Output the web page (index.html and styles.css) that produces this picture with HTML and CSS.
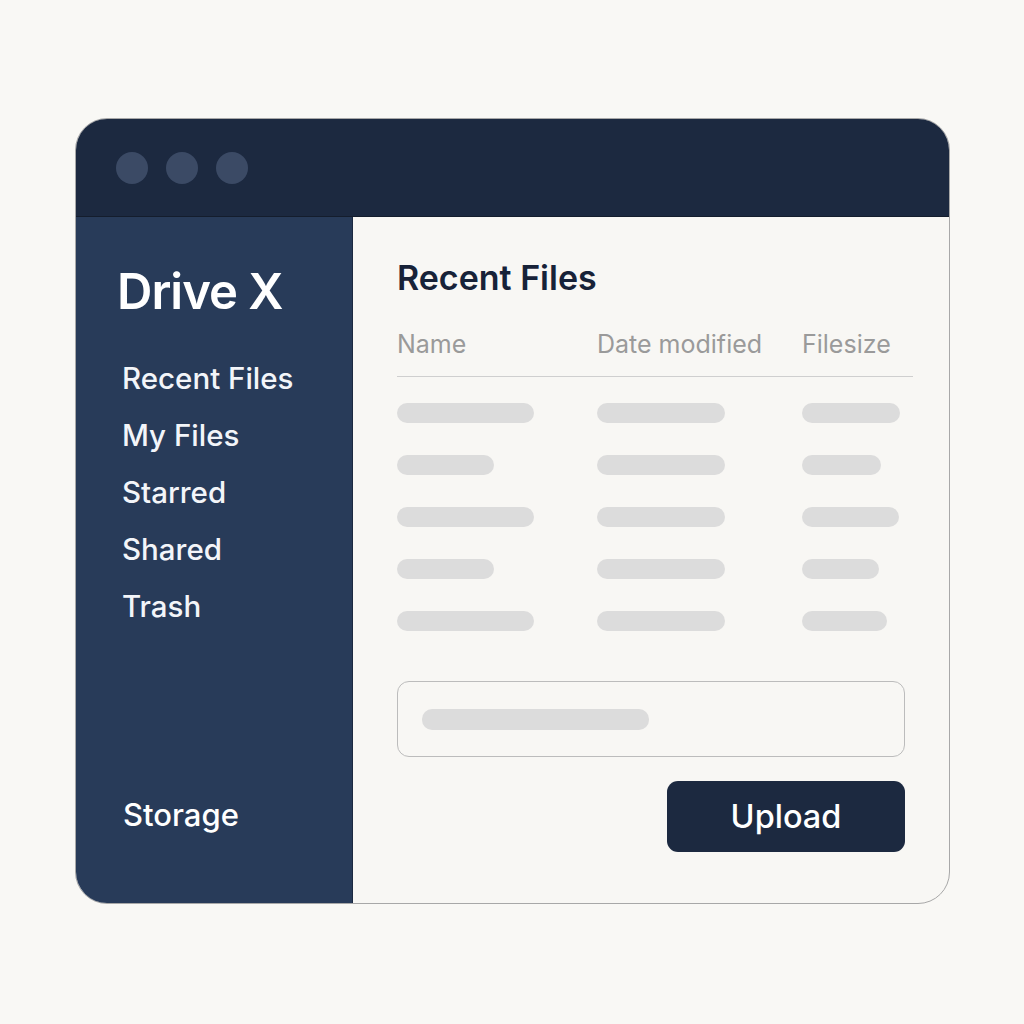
FILE: index.html
```html
<!DOCTYPE html>
<html lang="en">
<head>
<meta charset="utf-8">
<title>Drive X</title>
<link rel="stylesheet" href="styles.css">
</head>
<body>
<div class="page">
  <div class="window">
    <div class="titlebar">
      <span class="dot"></span><span class="dot"></span><span class="dot"></span>
    </div>
    <div class="main">
      <aside class="sidebar">
        <div class="brand">Drive X</div>
        <nav class="nav">
          <div class="nav-item">Recent Files</div>
          <div class="nav-item">My Files</div>
          <div class="nav-item">Starred</div>
          <div class="nav-item">Shared</div>
          <div class="nav-item">Trash</div>
        </nav>
        <div class="storage">Storage</div>
      </aside>
      <section class="content">
        <h1 class="heading">Recent Files</h1>
        <div class="table">
          <div class="thead">
            <div>Name</div><div>Date modified</div><div>Filesize</div>
          </div>
          <div class="row"><span class="bar" style="width:137px"></span><span class="bar" style="width:128px"></span><span class="bar" style="width:98px"></span></div>
          <div class="row"><span class="bar" style="width:97px"></span><span class="bar" style="width:128px"></span><span class="bar" style="width:79px"></span></div>
          <div class="row"><span class="bar" style="width:137px"></span><span class="bar" style="width:128px"></span><span class="bar" style="width:97px"></span></div>
          <div class="row"><span class="bar" style="width:97px"></span><span class="bar" style="width:128px"></span><span class="bar" style="width:77px"></span></div>
          <div class="row"><span class="bar" style="width:137px"></span><span class="bar" style="width:128px"></span><span class="bar" style="width:85px"></span></div>
        </div>
        <div class="input"><span class="bar input-bar"></span></div>
        <div class="actions"><button class="upload">Upload</button></div>
      </section>
    </div>
  </div>
</div>
</body>
</html>
```
FILE: styles.css
```css
* { box-sizing: border-box; }
html, body { margin: 0; padding: 0; }
body {
  background: #f9f8f5;
  font-family: Inter, "Liberation Sans", Arial, sans-serif;
  width: 1024px;
  height: 1024px;
}
.page {
  padding: 118px 74px 0 75px;
}
.window {
  width: 875px;
  height: 786px;
  border-radius: 32px;
  overflow: hidden;
  display: flex;
  flex-direction: column;
  background: #f8f7f4;
  border: 1px solid #a8a8a8;
}
.titlebar {
  height: 98px;
  flex: none;
  background: #1c2940;
  display: flex;
  align-items: center;
  gap: 18px;
  padding-left: 40px;
  border-bottom: 1px solid #141d2d;
}
.dot {
  width: 32px;
  height: 32px;
  border-radius: 50%;
  background: #3b4a65;
}
.main {
  flex: 1;
  display: flex;
}
.sidebar {
  width: 277px;
  flex: none;
  background: #283b59;
  color: #ffffff;
  display: flex;
  flex-direction: column;
  padding: 43px 0 60px 0;
  border-right: 1px solid #1c2940;
}
.brand {
  font-size: 49px;
  font-weight: 600;
  line-height: 64px;
  letter-spacing: -1px;
  padding-left: 41px;
}
.nav {
  margin-top: 26px;
  padding-left: 46px;
}
.nav-item {
  font-size: 29.5px;
  line-height: 57px;
  font-weight: 500;
  color: #f3f5f9;
}
.storage {
  margin-top: auto;
  padding-left: 47px;
  font-size: 31px;
  line-height: 57px;
  font-weight: 500;
}
.content {
  flex: 1;
  padding: 41px 44px 0 44px;
  display: flex;
  flex-direction: column;
}
.heading {
  margin: 0;
  font-size: 34px;
  line-height: 40px;
  font-weight: 600;
  color: #172238;
}
.table {
  margin-top: 31px;
  margin-right: -8px;
}
.thead, .row {
  display: grid;
  grid-template-columns: 200px 205px 1fr;
  align-items: center;
}
.thead {
  font-size: 25px;
  line-height: 30px;
  color: #9a9a9a;
  padding-bottom: 17px;
  border-bottom: 1px solid #cfcfcf;
  margin-bottom: 10px;
}
.row {
  height: 52px;
}
.bar {
  display: block;
  height: 20px;
  border-radius: 10px;
  background: #dcdcdc;
}
.input {
  margin-top: 34px;
  height: 76px;
  border: 1px solid #bcbcbc;
  border-radius: 12px;
  display: flex;
  align-items: center;
  padding-left: 24px;
}
.input-bar {
  width: 227px;
  height: 21px;
}
.actions {
  margin-top: 24px;
  display: flex;
  justify-content: flex-end;
}
.upload {
  width: 238px;
  height: 71px;
  border: none;
  border-radius: 11px;
  background: #1c2940;
  color: #ffffff;
  font-family: Inter, "Liberation Sans", Arial, sans-serif;
  font-size: 32.5px;
  font-weight: 500;
}
```
